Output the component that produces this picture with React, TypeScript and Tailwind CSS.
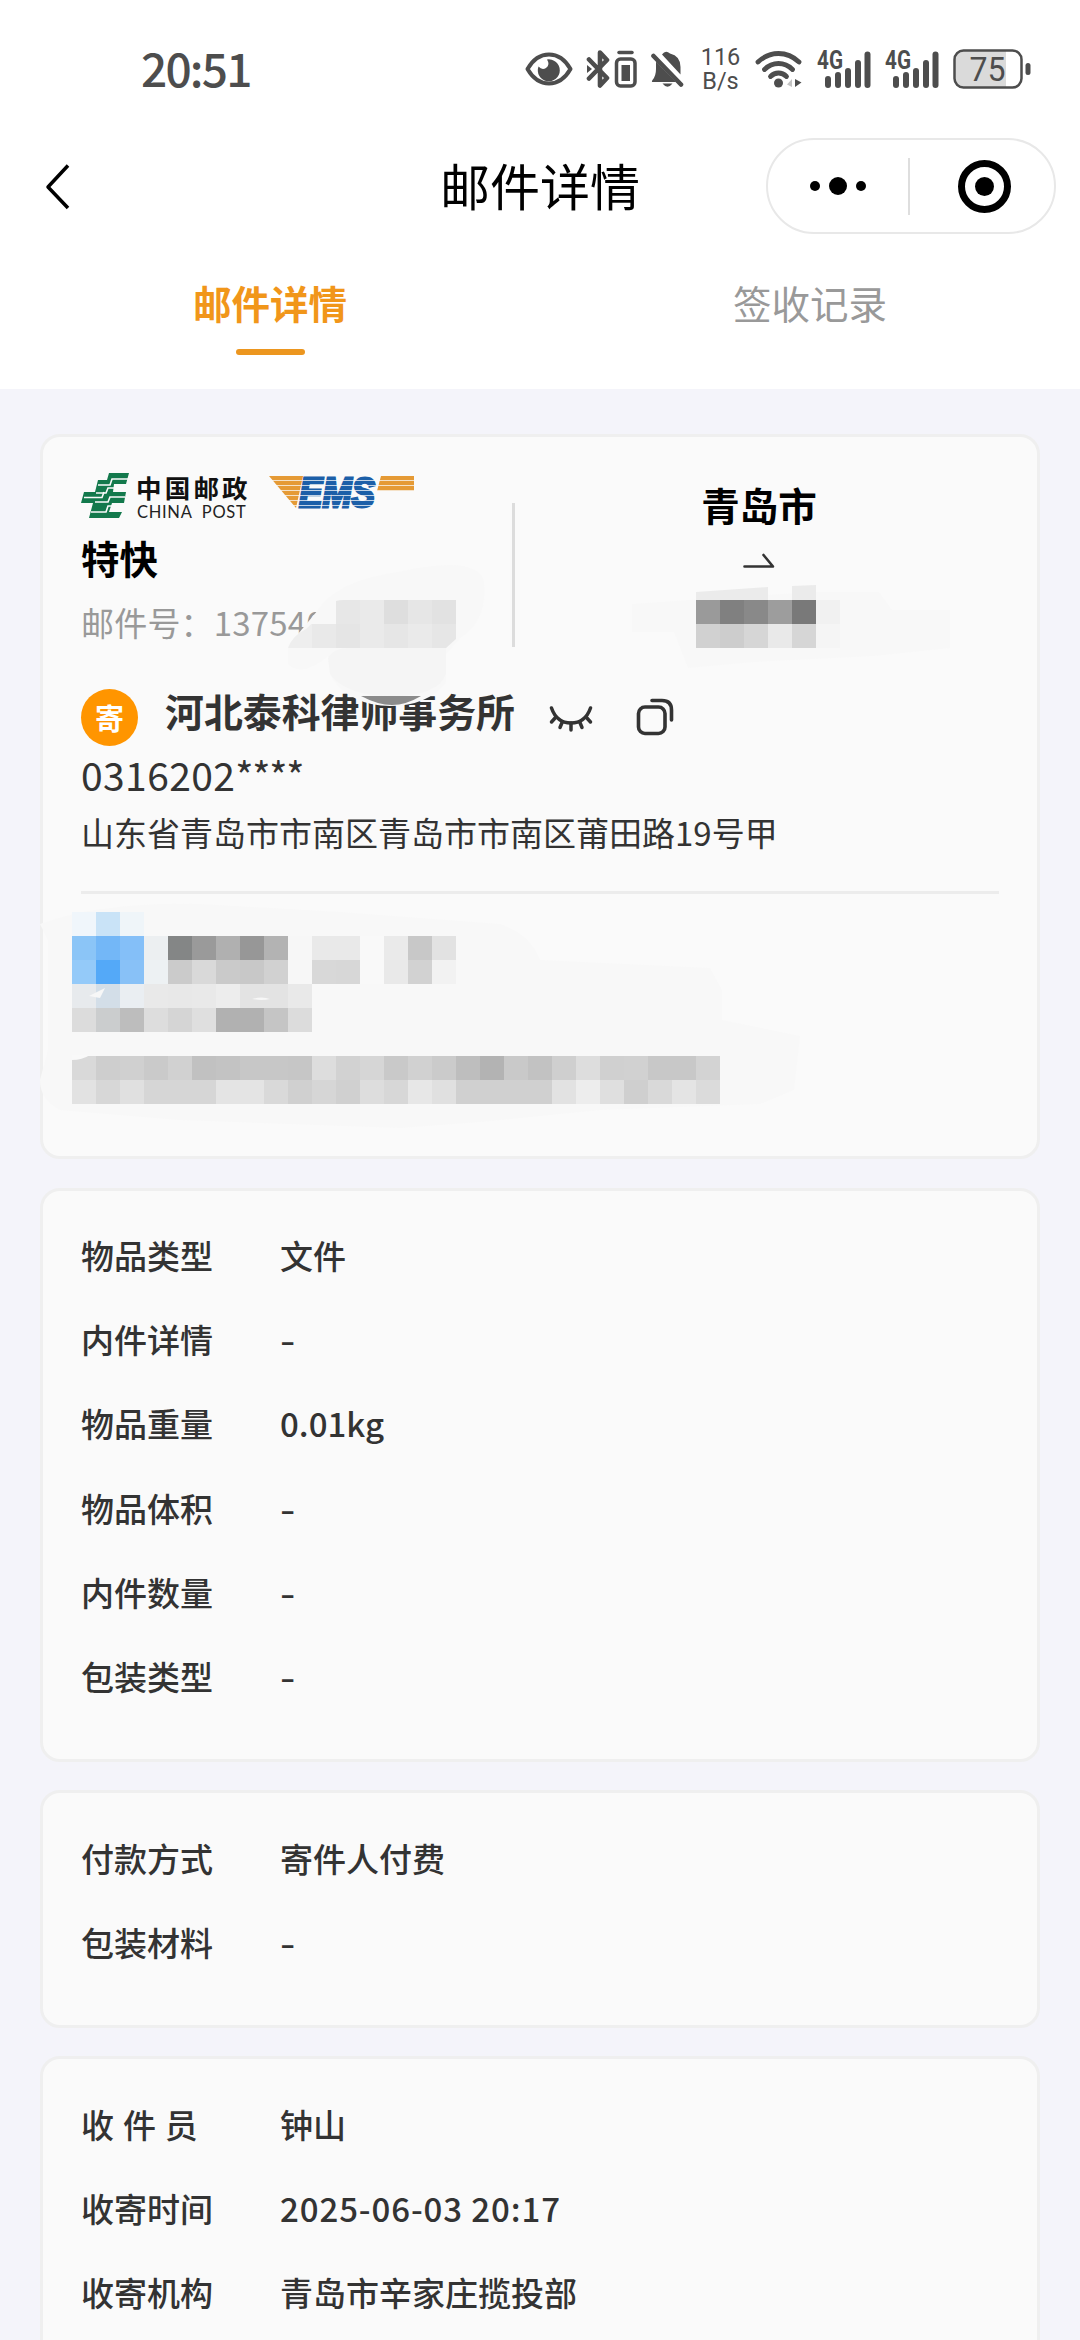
import type { ReactNode } from 'react'

type Row = { label: string; value: string }

const GOODS: Row[] = [
  { label: '物品类型', value: '文件' },
  { label: '内件详情', value: '-' },
  { label: '物品重量', value: '0.01kg' },
  { label: '物品体积', value: '-' },
  { label: '内件数量', value: '-' },
  { label: '包装类型', value: '-' },
]

const PAYMENT: Row[] = [
  { label: '付款方式', value: '寄件人付费' },
  { label: '包装材料', value: '-' },
]

const PICKUP: Row[] = [
  { label: '收 件 员', value: '钟山' },
  { label: '收寄时间', value: '2025-06-03 20:17' },
  { label: '收寄机构', value: '青岛市辛家庄揽投部' },
]

// masked blocks, one colour per 24px cell
const CELL = 24

type MaskRow = { x: number; y: number; cells: string }

const NO_MASK: MaskRow[] = [
  { x: 48, y: 0, cells: 'e7e7e7 eaeaea dedede e6e6e6 e2e2e2' },
  { x: 0, y: 24, cells: 'eeeeee e9e9e9 e5e5e5 eaeaea e6e6e6 eaeaea e6e6e6' },
]

const CITY_MASK: MaskRow[] = [
  { x: 72, y: 16, cells: '9a9a9a 808080 898989 9d9d9d 797979 f1f1f1' },
  { x: 72, y: 40, cells: 'd1d1d1 cdcdcd d6d6d6 e9e9e9 d6d6d6 f5f5f5' },
]

const RECEIVER_MASK: MaskRow[] = [
  { x: 32, y: 12, cells: 'f0f6fb c9e3f7 eff5f9' },
  { x: 32, y: 36, cells: '8bc5f7 73b7f7 84bff8 eceff1 848686 9a9a9a b0b0b0 979797 b3b3b3 f7f7f7 e9e9e9 e9e9e9 f9f9f9 eaeaea c8c8c8 e2e2e2' },
  { x: 32, y: 60, cells: '94caf9 54a9f8 88c1f7 edf1f3 cbcbcb d9d9d9 cacaca c8c8c8 d1d1d1 f7f7f7 d8d8d8 d7d7d7 f9f9f9 e9e9e9 d2d2d2 f2f2f2' },
  { x: 32, y: 84, cells: 'e7eaed d3dee8 eaeef2 e9e9e9 e8e8e8 e9e9e9 ededed e3e3e3 e3e3e3 e9e9e9' },
  { x: 32, y: 108, cells: 'dcdcdc cbcdce bdbdbd dddddd d5d5d5 dfdfdf b1b1b1 b1b1b1 c5c5c5 dcdcdc' },
  { x: 32, y: 156, cells: 'd9d9d9 cecece d0d0d0 cacaca d1d1d1 c1c1c1 c3c3c3 c7c7c7 c7c7c7 c6c6c6 dddddd d2d2d2 d6d6d6 c9c9c9 d1d1d1 cbcbcb bebebe b3b3b3 c9c9c9 c2c2c2 cfcfcf dddddd d0d0d0 d1d1d1 c8c8c8 c8c8c8 d3d3d3' },
  { x: 32, y: 180, cells: 'e2e2e2 d7d7d7 e0e0e0 d6d6d6 d6d6d6 d6d6d6 e4e4e4 e4e4e4 d9d9d9 d0d0d0 d6d6d6 d0d0d0 dddddd d7d7d7 e7e7e7 e0e0e0 d0d0d0 d0d0d0 d0d0d0 d0d0d0 e2e2e2 ededed dfdfdf cfcfcf d9d9d9 e4e4e4 dbdbdb' },
]

function MaskCells({ rows }: { rows: MaskRow[] }) {
  return (
    <g shapeRendering="crispEdges">
      {rows.map(r =>
        r.cells.split(' ').map((c, i) => (
          <rect key={`${r.y}-${i}`} x={r.x + i * CELL} y={r.y} width={CELL} height={CELL} fill={`#${c}`} />
        ))
      )}
    </g>
  )
}

function SignalIcon() {
  return (
    <svg width="54" height="40" viewBox="0 0 54 40" fill="#4d4d4d" className="ml-[14px] overflow-visible">
      <text x="0" y="20" textLength="26" lengthAdjust="spacingAndGlyphs" fontFamily="Roboto" fontWeight="700" fontSize="25">4G</text>
      <rect x="8" y="27" width="6" height="12" rx="3" />
      <rect x="18" y="23" width="6" height="16" rx="3" />
      <rect x="28" y="19" width="6" height="20" rx="3" />
      <rect x="38" y="11" width="6" height="28" rx="3" />
      <rect x="47.500" y="2.500" width="6" height="36.500" rx="3" />
    </svg>
  )
}

function StatusBar() {
  return (
    <div className="flex h-[140px] items-start pl-[141px] pr-[48px]">
      <span className="mt-[33px] text-[46px] font-medium leading-[68px] tracking-[-1.8px] text-[#4d4d4d]">20:51</span>
      <div className="ml-auto mt-[49px] flex h-10 items-center">
        <svg width="48" height="40" viewBox="0 0 48 40">
          <path d="M2.500 20C8 10.500 15 5.500 24 5.500S40 10.500 45.500 20C40 29.500 33 34.500 24 34.500S8 29.500 2.500 20Z" fill="none" stroke="#4d4d4d" strokeWidth="4" strokeLinejoin="round" />
          <path d="M22 10.500A11 11 0 1 1 13.500 17.500Q17 21.500 21 19Q25.500 16 22 10.500Z" fill="#4d4d4d" />
        </svg>
        <svg width="52" height="40" viewBox="0 0 52 40" className="ml-[13px]" fill="none" stroke="#4d4d4d">
          <path d="M3 10.500 21 29 14 36.500V3.500L21 11 3 29.500" strokeWidth="4.600" strokeLinejoin="round" strokeLinecap="round" />
          <path d="M1 16 6 20 1 24Z" fill="#4d4d4d" stroke="none" />
          <rect x="30.500" y="10" width="18.500" height="27" rx="4" strokeWidth="3.500" />
          <path d="M33 3.500H46" strokeWidth="3.500" strokeLinecap="round" />
          <rect x="35.500" y="16" width="8.500" height="16" fill="#4d4d4d" stroke="none" />
        </svg>
        <svg width="34" height="40" viewBox="0 0 34 40" className="ml-[12px]" fill="#4d4d4d">
          <path d="M12 5.500Q15.500 0.500 20 4.500Q30.500 7 30.500 18V25.500Z" />
          <path d="M6 12.500 26 33H3Q1 33 2.500 31Q6 27 6 20Z" />
          <path d="M12.500 34.500H22.500Q17.500 41 12.500 34.500Z" />
          <path d="M3.500 7 31 35.500" stroke="#4d4d4d" strokeWidth="4.600" strokeLinecap="round" />
          <path d="M7.500 4.500 33 31" stroke="#fff" strokeWidth="2.400" />
        </svg>
        <div className="ml-[16px] w-[41px] text-center font-[Roboto] text-[23.500px] leading-[24px] text-[#4d4d4d]">
          <div>116</div>
          <div>B/s</div>
        </div>
        <svg width="48" height="40" viewBox="0 0 48 40" className="ml-[14px]" fill="none" stroke="#4d4d4d" strokeWidth="4.800" strokeLinecap="round">
          <path d="M3 13Q12 4.500 23.500 4.500T44 13" />
          <path d="M9.500 20.500Q15.500 14.500 23.500 14.500T37.500 20.500" />
          <path d="M15.500 27.500Q19 24 23.500 24T31.500 27.500" />
          <circle cx="23.500" cy="34" r="4.500" fill="#4d4d4d" stroke="none" />
          <path d="M40 30 46.500 33.500 40 38Z" fill="#4d4d4d" stroke="none" />
          <path d="M37 30V38L32 35.500Z" fill="#c4c4c4" stroke="none" />
        </svg>
        <SignalIcon />
        <SignalIcon />
        <svg width="79" height="40" viewBox="0 0 79 40" className="ml-[14px]">
          <rect x="1.500" y="1.500" width="67" height="37" rx="9" fill="#fff" />
          <path d="M10 1.500H53V38.500H10Q1.500 38.500 1.500 30V10Q1.500 1.500 10 1.500Z" fill="#dadada" />
          <rect x="1.500" y="1.500" width="67" height="37" rx="9" fill="none" stroke="#4d4d4d" strokeWidth="2.500" />
          <text x="34.500" y="32" textAnchor="middle" textLength="36" lengthAdjust="spacingAndGlyphs" fontFamily="Roboto" fontSize="34" fill="#4d4d4d">75</text>
          <rect x="72.500" y="14" width="5" height="12" rx="2.500" fill="#4d4d4d" />
        </svg>
      </div>
    </div>
  )
}

function NavBar() {
  return (
    <div className="relative flex h-[94px] items-center justify-center">
      <svg width="26" height="48" viewBox="0 0 26 48" className="absolute left-[45px] top-[23px]">
        <path d="M23 2.500 3 24 23 45" fill="none" stroke="#000" strokeWidth="3.500" strokeLinejoin="round" />
      </svg>
      <h1 className="pb-[7px] text-[50px] leading-none text-black">邮件详情</h1>
      <div className="absolute right-6 top-[-2px] flex h-24 w-[290px] items-center rounded-full border-2 border-[#e8e8e8]">
        <div className="flex flex-1 items-center justify-center gap-[9px]">
          <i className="size-[10px] rounded-full bg-black" />
          <i className="size-[18px] rounded-full bg-black" />
          <i className="size-[10px] rounded-full bg-black" />
        </div>
        <div className="h-[57px] w-[2px] bg-[#dedede]" />
        <div className="flex flex-1 items-center justify-center pl-1">
          <span className="flex size-[53px] items-center justify-center rounded-full border-[7px] border-black">
            <i className="size-[19px] rounded-full bg-black" />
          </span>
        </div>
      </div>
    </div>
  )
}

function Tabs() {
  return (
    <div className="grid h-[155px] grid-cols-2 text-[38.500px] leading-none">
      <div className="flex flex-col items-center pt-[49px] font-bold text-[#f1961a]">
        邮件详情
        <i className="mt-[27px] h-[6px] w-[69px] rounded-full bg-[#ec961f]" />
      </div>
      <div className="flex flex-col items-center pt-[49px] text-[#999]">签收记录</div>
    </div>
  )
}

function ChinaPostLogo() {
  return (
    <div className="flex h-[50px]">
      <svg width="48" height="50" viewBox="0 0 48 50">
        <path d="M28 1H48L45 12H33L32 20H45L43 31H31L28 40H41L38 46H8L12 31H0L3 20H14L17 8H26Z" fill="#13794c" />
        <g fill="none" stroke="#fafafa" strokeWidth="1.600">
          <path d="M47 7H31L29 13H17" />
          <path d="M45 16H27L25 21H15" />
          <path d="M3 25.500H21L23 20" />
          <path d="M44 25H29L27 30H14" />
          <path d="M41 34H27L25 40H10" />
        </g>
      </svg>
      <div className="ml-[7px] w-[114px] whitespace-nowrap">
        <div className="pt-[2px] text-[25.500px] font-bold leading-[26px] tracking-[3.200px] text-[#111]">中国邮政</div>
        <div className="mt-[3px] pl-px font-[Lato] text-[16.500px] leading-[18px] tracking-[0.700px] text-[#222]">CHINA&nbsp;&nbsp;POST</div>
      </div>
    </div>
  )
}

function EmsLogo() {
  const lines = [4.5, 9.5, 14.5, 19.5, 24.5, 29.5]
  return (
    <svg width="148" height="36" viewBox="0 0 148 36" className="ml-[19px] mt-[4px] overflow-visible">
      <path d="M0 0H34L27 32Z" fill="#e59a35" />
      <path d="M112 0H145V15H108Z" fill="#e59a35" />
      <text x="30" y="31" textLength="76" lengthAdjust="spacingAndGlyphs" fontFamily="Liberation Sans" fontWeight="700" fontStyle="italic" fontSize="43" fill="#1c5fa8" stroke="#1c5fa8" strokeWidth="3">EMS</text>
      {lines.map(y => (
        <path key={y} d={`M0 ${y}H146`} stroke="#fafafa" strokeOpacity="0.75" strokeWidth="1.200" />
      ))}
    </svg>
  )
}

function Card({ children, className = '' }: { children: ReactNode; className?: string }) {
  return <section className={`relative rounded-[20px] border-[3px] border-[#efefef] bg-[#fafafa] ${className}`}>{children}</section>
}

function InfoCard({ rows }: { rows: Row[] }) {
  return (
    <Card className="px-[38px] pb-[40px] pt-[23px]">
      {rows.map(r => (
        <div key={r.label} className="flex h-[84.200px] items-center text-[33px] font-medium leading-none text-[#333]">
          <span className="w-[199px] whitespace-pre [word-spacing:1.500px]">{r.label}</span>
          {r.value === '-' ? (
            <span className="origin-left scale-x-[1.3]">-</span>
          ) : (
            <span className={r.value.length > 10 ? 'tracking-[0.900px]' : ''}>{r.value}</span>
          )}
        </div>
      ))}
    </Card>
  )
}

function MailCard() {
  return (
    <Card className="h-[725px] px-[38px] pt-[35px]">
      <div className="flex">
        <div className="w-[430px]">
          <div className="flex h-[50px] items-start">
            <ChinaPostLogo />
            <EmsLogo />
          </div>
          <div className="mt-[15px] text-[38.500px] font-bold leading-[40px] text-black">特快</div>
          <div className="mt-[25px] whitespace-nowrap text-[33px] leading-[40px] tracking-[0.200px] text-[#999]">邮件号：137540</div>
        </div>
        <div className="ml-px mt-[31px] h-[144px] w-[3px] bg-[#dcdcdc]" />
        <div className="flex flex-1 flex-col items-center pl-[4px] pt-[13px]">
          <div className="text-[38.500px] font-bold leading-[38px] text-black">青岛市</div>
          <svg width="32" height="16" viewBox="0 0 32 16" className="mt-[30px]">
            <path d="M1.500 13.500H30L20.500 2" fill="none" stroke="#333" strokeWidth="2.600" strokeLinecap="round" strokeLinejoin="round" />
          </svg>
        </div>
      </div>

      <div className="mt-[41px] flex h-[58px] items-center">
        <span className="flex size-[57px] items-center justify-center rounded-full bg-[#ff9500] text-[29px] font-bold leading-none text-white">寄</span>
        <span className="ml-[27px] pb-[14px] text-[38.900px] font-bold leading-none text-[#333]">河北泰科律师事务所</span>
        <svg width="44" height="26" viewBox="0 0 44 26" className="ml-[34px] mt-[3px]" fill="none" stroke="#333" strokeWidth="3.500" strokeLinecap="round">
          <path d="M2.500 2C6 12 13 17 22 17S38 12 41.500 2" />
          <path d="M7 11 2.500 16M13.500 15.500 11 21.500M22 17V24M30.500 15.500 33 21.500M37 11 41.500 16" />
        </svg>
        <svg width="38" height="38" viewBox="0 0 38 38" className="ml-[43px]" fill="none" stroke="#333" strokeWidth="3.600" strokeLinecap="round">
          <rect x="2.500" y="9" width="26.500" height="26.500" rx="6.500" />
          <path d="M16 2.500H26Q35.500 2.500 35.500 12V22" />
        </svg>
      </div>
      <div className="mt-[6px] text-[39px] leading-[44px] tracking-[0.400px] text-[#333]">
        0316202<span className="tracking-[-1.200px]">****</span>
      </div>
      <div className="mt-[14px] text-[33px] leading-[44px] text-[#333]">山东省青岛市市南区青岛市市南区莆田路19号甲</div>
      <div className="mt-[37px] h-[3px] w-[918px] bg-[#ececec]" />

      {/* hidden tracking number */}
      <svg width="200" height="150" viewBox="0 0 200 150" className="absolute left-[245px] top-[123px]">
        <defs>
          <clipPath id="noShape">
            <path d="M0 88Q4 76 18 69L44 44Q46 40 56 40H168V79L158 88Z" />
          </clipPath>
        </defs>
        <path d="M30 50Q50 20 110 12Q190 -6 196 22Q200 60 172 78L158 94V122Q140 146 102 146T44 118L40 96Q14 118 0 104V86Z" fill="#f8f8f8" />
        <path d="M40 98Q46 88 60 88H158V114Q150 136 104 136T42 114Z" fill="#f5f5f5" />
        <g clipPath="url(#noShape)">
          <g transform="translate(0 40)">
            <MaskCells rows={NO_MASK} />
          </g>
        </g>
        <path d="M73 136H133Q118 145 104 145T73 136Z" fill="#8b8b8b" />
      </svg>

      {/* hidden destination city */}
      <svg width="330" height="90" viewBox="0 0 330 90" className="absolute left-[581px] top-[147px]">
        <path d="M8 20 66 16 190 8H255L268 26H326V64L250 72 130 78 64 84 50 48H8Z" fill="#f8f8f8" />
        <path d="M72 8 144 3V16H72ZM168 2 192 1V16H168Z" fill="#ebebeb" />
        <MaskCells rows={CITY_MASK} />
      </svg>

      {/* hidden receiver */}
      <svg width="780" height="250" viewBox="0 0 780 250" className="absolute left-[-3px] top-[463px]">
        <path d="M0 24Q60 2 160 4L300 12 460 24Q490 34 500 60L670 68 682 90V120L760 136 754 190 720 204 560 210 440 222 360 228 140 220 20 210Q0 200 0 180L8 150V40Z" fill="#f8f8f8" />
        <MaskCells rows={RECEIVER_MASK} />
        <path d="M49 96 65 88 60 98Z" fill="#f7f7f7" />
        <path d="M212 99Q222 96 230 99Q222 101 212 99Z" fill="#f7f7f7" />
        <path d="M32 155H50Q42 160 32 160Z" fill="#f9f9f9" />
      </svg>
    </Card>
  )
}

export default function App() {
  return (
    <div className="h-[2340px] w-[1080px] overflow-hidden bg-[#f4f4fa] font-['Noto_Sans_CJK_SC',sans-serif]">
      <header className="bg-white">
        <StatusBar />
        <NavBar />
        <Tabs />
      </header>
      <main className="flex flex-col gap-[28.500px] px-[40px] pt-[45px]">
        <MailCard />
        <InfoCard rows={GOODS} />
        <InfoCard rows={PAYMENT} />
        <InfoCard rows={PICKUP} />
      </main>
    </div>
  )
}
